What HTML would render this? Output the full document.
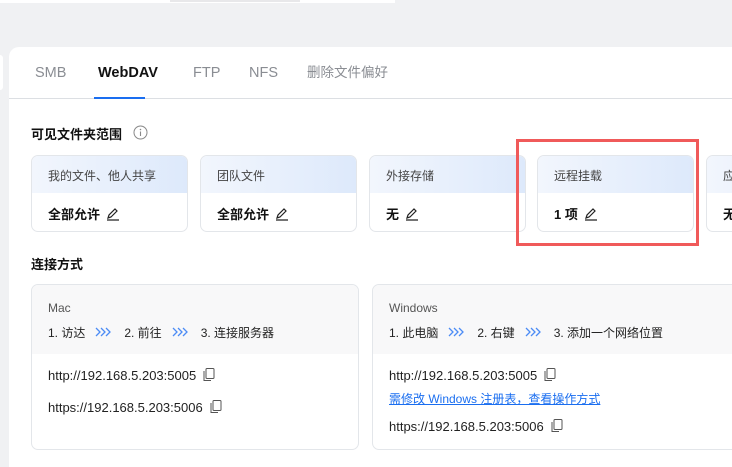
<!DOCTYPE html>
<html><head><meta charset="utf-8"><style>
*{margin:0;padding:0;box-sizing:border-box}
body{width:732px;height:455px;overflow:hidden;background:#f0f1f3;font-family:"Liberation Sans","Noto Sans CJK SC",sans-serif;color:#222;position:relative}
.abs{position:absolute}
.main{left:9px;top:47px;width:740px;height:420px;background:#fff;border-radius:10px 0 0 0}
.tab{top:63px;font-size:14.5px;line-height:20px;height:20px;color:#8a8d93}
.card{top:155px;width:157px;height:77px;border:1px solid #e3e6ea;border-radius:7px;overflow:hidden;background:#fff}
.card .h{height:37px;background:linear-gradient(90deg,#f2f6fd,#dde9fb);font-size:12px;color:#444;padding:11px 0 0 16px}
.card .b{font-size:13px;font-weight:bold;padding:11px 0 0 16px;color:#111}
.pen{display:inline-block;vertical-align:-2px;margin-left:6px}
.cc{top:284px;height:166px;border:1px solid #e3e6ea;border-radius:7px;overflow:hidden;background:#fff}
.cc .h{height:69px;background:#f8f8f9;padding:16px 0 0 16px;font-size:12px;color:#555}
.cc .s{margin-top:9px;color:#222}
.arr{display:inline-block;width:16px;height:10px;margin:0 13px 0 10px;vertical-align:0}
.u{font-size:13px;color:#222}
.cp{display:inline-block;vertical-align:-2px;margin-left:7px}
</style></head><body>
<div class="abs" style="left:0;top:0;width:395px;height:3px;background:#fff"></div>
<div class="abs" style="left:170px;top:0;width:130px;height:2px;background:#e8e8ea"></div>
<div class="abs" style="left:0;top:55px;width:3px;height:35px;background:#fff;border-radius:0 3px 3px 0"></div>
<div class="abs main"></div>
<div class="abs tab" style="left:35px">SMB</div>
<div class="abs tab" style="left:98px;color:#111;font-weight:bold">WebDAV</div>
<div class="abs tab" style="left:193px">FTP</div>
<div class="abs tab" style="left:249px">NFS</div>
<div class="abs tab" style="left:307px;font-size:13.5px">删除文件偏好</div>
<div class="abs" style="left:9px;top:98px;width:730px;height:1px;background:#dcdfe3"></div>
<div class="abs" style="left:94px;top:97px;width:51px;height:2px;background:#1a6ef0"></div>
<div class="abs" style="left:31px;top:124px;font-size:13px;font-weight:bold;color:#111">可见文件夹范围</div>
<svg class="abs" style="left:133px;top:125px" width="15" height="15" viewBox="0 0 15 15"><circle cx="7.5" cy="7.5" r="6.5" fill="none" stroke="#888" stroke-width="1"/><circle cx="7.5" cy="4.5" r=".8" fill="#888"/><path d="M7.5 6.5v4.5" stroke="#888" stroke-width="1.1"/></svg>
<div class="abs card" style="left:31px"><div class="h">我的文件、他人共享</div><div class="b">全部允许<svg class="pen" width="14" height="14" viewBox="0 0 14 14"><path d="M2 11l1-3 6-6 2 2-6 6z M1 13h12" fill="none" stroke="#222" stroke-width="1.2"/></svg></div></div>
<div class="abs card" style="left:200px"><div class="h">团队文件</div><div class="b">全部允许<svg class="pen" width="14" height="14" viewBox="0 0 14 14"><path d="M2 11l1-3 6-6 2 2-6 6z M1 13h12" fill="none" stroke="#222" stroke-width="1.2"/></svg></div></div>
<div class="abs card" style="left:369px"><div class="h">外接存储</div><div class="b">无<svg class="pen" width="14" height="14" viewBox="0 0 14 14"><path d="M2 11l1-3 6-6 2 2-6 6z M1 13h12" fill="none" stroke="#222" stroke-width="1.2"/></svg></div></div>
<div class="abs card" style="left:537px"><div class="h">远程挂载</div><div class="b">1 项<svg class="pen" width="14" height="14" viewBox="0 0 14 14"><path d="M2 11l1-3 6-6 2 2-6 6z M1 13h12" fill="none" stroke="#222" stroke-width="1.2"/></svg></div></div>
<div class="abs card" style="left:706px"><div class="h">应</div><div class="b">无</div></div>
<div class="abs" style="left:516px;top:139px;width:183px;height:107px;border:3px solid #f05a5a"></div>
<div class="abs" style="left:31px;top:254px;font-size:13px;font-weight:bold;color:#111">连接方式</div>
<div class="abs cc" style="left:31px;width:328px"><div class="h">Mac<div class="s">1. 访达<svg class="arr" viewBox="0 0 16 10"><path d="M1 1l4 4-4 4M6 1l4 4-4 4M11 1l4 4-4 4" fill="none" stroke="#4c8cf5" stroke-width="1.3"/></svg>2. 前往<svg class="arr" viewBox="0 0 16 10"><path d="M1 1l4 4-4 4M6 1l4 4-4 4M11 1l4 4-4 4" fill="none" stroke="#4c8cf5" stroke-width="1.3"/></svg>3. 连接服务器</div></div>
<div class="abs u" style="left:16px;top:83px">http://192.168.5.203:5005<svg class="cp" width="12" height="14" viewBox="0 0 12 14"><rect x="3" y=".5" width="8" height="10" rx="1" fill="none" stroke="#555"/><path d="M1 3v9.5h7" fill="none" stroke="#555"/></svg></div>
<div class="abs u" style="left:16px;top:115px">https://192.168.5.203:5006<svg class="cp" width="12" height="14" viewBox="0 0 12 14"><rect x="3" y=".5" width="8" height="10" rx="1" fill="none" stroke="#555"/><path d="M1 3v9.5h7" fill="none" stroke="#555"/></svg></div></div>
<div class="abs cc" style="left:372px;width:380px"><div class="h">Windows<div class="s">1. 此电脑<svg class="arr" viewBox="0 0 16 10"><path d="M1 1l4 4-4 4M6 1l4 4-4 4M11 1l4 4-4 4" fill="none" stroke="#4c8cf5" stroke-width="1.3"/></svg>2. 右键<svg class="arr" viewBox="0 0 16 10"><path d="M1 1l4 4-4 4M6 1l4 4-4 4M11 1l4 4-4 4" fill="none" stroke="#4c8cf5" stroke-width="1.3"/></svg>3. 添加一个网络位置</div></div>
<div class="abs u" style="left:16px;top:83px">http://192.168.5.203:5005<svg class="cp" width="12" height="14" viewBox="0 0 12 14"><rect x="3" y=".5" width="8" height="10" rx="1" fill="none" stroke="#555"/><path d="M1 3v9.5h7" fill="none" stroke="#555"/></svg></div>
<div class="abs u" style="left:16px;top:105px;font-size:12px;color:#1a6ef0;text-decoration:underline">需修改 Windows 注册表，查看操作方式</div>
<div class="abs u" style="left:16px;top:134px">https://192.168.5.203:5006<svg class="cp" width="12" height="14" viewBox="0 0 12 14"><rect x="3" y=".5" width="8" height="10" rx="1" fill="none" stroke="#555"/><path d="M1 3v9.5h7" fill="none" stroke="#555"/></svg></div></div>
</body></html>
